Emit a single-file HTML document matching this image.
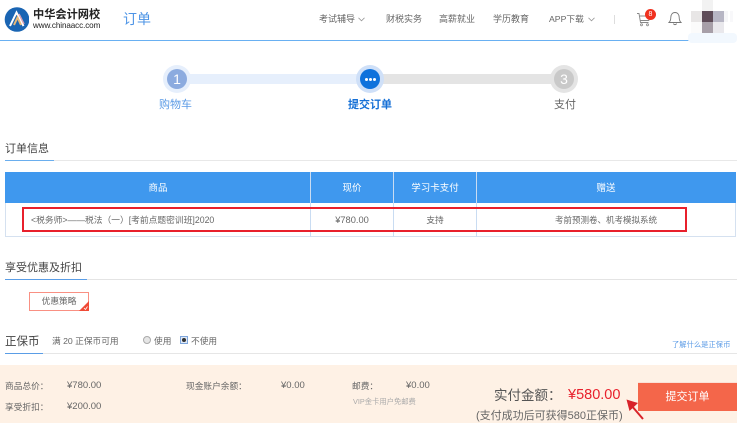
<!DOCTYPE html>
<html lang="zh"><head><meta charset="utf-8"><title>订单</title>
<style>
html,body{margin:0;padding:0;background:#fff}
#p{position:relative;width:737px;height:423px;overflow:hidden;background:#fff;font-family:"Liberation Sans","Noto Sans CJK SC",sans-serif;color:#555;filter:blur(.25px)}
#p div,#p span.a{position:absolute;white-space:nowrap}
.t{line-height:14px;height:14px}
.n{font-size:9px;color:#666;top:12px}
.c{text-align:center}
.h{font-size:9.5px;color:#fff;top:182px;text-align:center}
.s{font-size:11px;color:#444}
.f{font-size:8.700px;color:#666}
</style></head><body><div id="p">

<svg style="position:absolute;left:4px;top:6px" width="25" height="27" viewBox="0 0 25 27">
<circle cx="13" cy="13.500" r="12.300" fill="#1a65b3"/>
<path d="M6 20L12.500 6.500L19.500 20" fill="none" stroke="#fff" stroke-width="2"/>
<path d="M10 19L13.500 11.500L17 19" fill="none" stroke="#e8b979" stroke-width="2"/>
<path d="M15 8L20 18" stroke="#d9a3b5" stroke-width="1.500"/>
</svg>
<div class="t" style="left:33px;top:8px;font-size:11.200px;font-weight:700;color:#222">中华会计网校</div>
<div class="t" style="left:33px;top:18.500px;font-size:8.100px;color:#222;letter-spacing:-.1px">www.chinaacc.com</div>
<div class="t" style="left:123px;top:11px;font-size:14px;line-height:16px;height:16px;color:#4d94e6">订单</div>

<div class="t n" style="left:319px">考试辅导</div>
<svg style="position:absolute;left:358px;top:17px" width="7" height="5"><path d="M.5 .8L3.500 3.800L6.500 .8" fill="none" stroke="#999" stroke-width=".8"/></svg>
<div class="t n" style="left:386px">财税实务</div>
<div class="t n" style="left:439px">高薪就业</div>
<div class="t n" style="left:493px">学历教育</div>
<div class="t n" style="left:549px;font-size:8.700px">APP下载</div>
<svg style="position:absolute;left:588px;top:17px" width="7" height="5"><path d="M.5 .8L3.500 3.800L6.500 .8" fill="none" stroke="#999" stroke-width=".8"/></svg>
<div style="left:614px;top:15px;width:1px;height:9px;background:#ddd"></div>

<svg style="position:absolute;left:636px;top:11px" width="15" height="16" viewBox="0 0 15 16">
<path d="M1 2.500H3L4.500 11.500H12.500M3.500 5H14L12.800 9.500H4.300" fill="none" stroke="#888" stroke-width=".9"/>
<circle cx="5.500" cy="13.800" r="1" fill="none" stroke="#888" stroke-width=".8"/><circle cx="11.500" cy="13.800" r="1" fill="none" stroke="#888" stroke-width=".8"/></svg>
<div class="c" style="left:645px;top:9px;width:11px;height:11px;border-radius:50%;background:#f0311f;color:#fff;font-size:7px;line-height:11px">8</div>
<svg style="position:absolute;left:668px;top:11px" width="14" height="15" viewBox="0 0 14 15">
<path d="M1 11.500C2.500 10 2.800 8.500 2.800 6.500C2.800 3.500 4.500 1.500 7 1.500C9.500 1.500 11.200 3.500 11.200 6.500C11.200 8.500 11.500 10 13 11.500ZM5.500 12.500C5.800 14 8.200 14 8.500 12.500" fill="none" stroke="#777" stroke-width=".9"/></svg>

<div style="left:702px;top:0;width:11px;height:11px;background:#f2f2f2"></div>
<div style="left:691px;top:11px;width:11px;height:11px;background:#e8e6e6"></div>
<div style="left:702px;top:11px;width:11px;height:11px;background:#5e4c58"></div>
<div style="left:713px;top:11px;width:11px;height:11px;background:#b7b6c4"></div>
<div style="left:724px;top:11px;width:4px;height:11px;background:#f6f6f8"></div>
<div style="left:730px;top:11px;width:3px;height:11px;background:#f8f8fa"></div>
<div style="left:691px;top:22px;width:11px;height:11px;background:#fbfbfb"></div>
<div style="left:702px;top:22px;width:11px;height:11px;background:#a79fa8"></div>
<div style="left:713px;top:22px;width:11px;height:11px;background:#e9e8ec"></div>

<div style="left:0;top:40px;width:689px;height:1px;background:#69b0f2"></div>
<div style="left:688px;top:33px;width:49px;height:10px;background:#f2f8fe;border-radius:4px"></div>

<div style="left:177px;top:74px;width:193px;height:10px;background:#e6effc"></div>
<div style="left:370px;top:74px;width:194px;height:10px;background:#e4e4e4"></div>
<div style="left:163px;top:65px;width:28px;height:28px;border-radius:50%;background:#e6effc"></div>
<div class="c" style="left:167px;top:69px;width:20px;height:20px;border-radius:50%;background:#8cabdf;color:#fff;font-size:14px;line-height:20px">1</div>
<div style="left:356px;top:65px;width:28px;height:28px;border-radius:50%;background:#cfe0f8"></div>
<div style="left:360px;top:69px;width:20px;height:20px;border-radius:50%;background:#0f72dc"></div>
<div style="left:364.500px;top:77.500px;width:3px;height:3px;border-radius:50%;background:#fff"></div>
<div style="left:368.500px;top:77.500px;width:3px;height:3px;border-radius:50%;background:#fff"></div>
<div style="left:372.500px;top:77.500px;width:3px;height:3px;border-radius:50%;background:#fff"></div>
<div style="left:550px;top:65px;width:28px;height:28px;border-radius:50%;background:#e4e4e4"></div>
<div class="c" style="left:554px;top:69px;width:20px;height:20px;border-radius:50%;background:#c9c9c9;color:#fff;font-size:14px;line-height:20px">3</div>
<div class="t" style="left:159px;top:98px;font-size:11px;color:#5b9be6">购物车</div>
<div class="t" style="left:348px;top:98px;font-size:11px;font-weight:700;color:#1670d6">提交订单</div>
<div class="t" style="left:554px;top:98px;font-size:11px;color:#666">支付</div>

<div class="t s" style="left:5px;top:142px">订单信息</div>
<div style="left:5px;top:160px;width:732px;height:1px;background:#e8e8e8"></div>
<div style="left:5px;top:159.500px;width:49px;height:1.500px;background:#6aaeee"></div>

<div style="left:5px;top:172px;width:731px;height:31px;background:#3f98ee"></div>
<div style="left:5px;top:203px;width:1px;height:34px;background:#d5e1f0"></div>
<div style="left:735px;top:203px;width:1px;height:34px;background:#d5e1f0"></div>
<div style="left:5px;top:236px;width:731px;height:1px;background:#d5e1f0"></div>
<div style="left:310px;top:172px;width:1px;height:65px;background:#c9dcf2"></div>
<div style="left:393px;top:172px;width:1px;height:65px;background:#c9dcf2"></div>
<div style="left:476px;top:172px;width:1px;height:65px;background:#c9dcf2"></div>
<div class="t h" style="left:6px;width:304px">商品</div>
<div class="t h" style="left:311px;width:82px">现价</div>
<div class="t h" style="left:394px;width:82px">学习卡支付</div>
<div class="t h" style="left:477px;width:258px">赠送</div>

<div class="t f" style="left:31px;top:212.500px;font-size:8.750px">&lt;税务师&gt;——税法（一）[考前点题密训班]2020</div>
<div class="t f c" style="left:311px;top:212.500px;width:82px;font-size:9.300px">¥780.00</div>
<div class="t f c" style="left:394px;top:212.500px;width:82px">支持</div>
<div class="t f" style="left:555px;top:212.500px;font-size:8.500px">考前预测卷、机考模拟系统</div>
<div style="left:22px;top:207px;width:661px;height:21px;border:2px solid #e8202c"></div>

<div class="t s" style="left:5px;top:261px">享受优惠及折扣</div>
<div style="left:5px;top:279px;width:732px;height:1px;background:#e4e4e4"></div>
<div style="left:5px;top:278.500px;width:82px;height:1.500px;background:#5a9de6"></div>

<div style="left:29px;top:292px;width:58px;height:17px;border:1px solid #f99083"></div>
<div class="t f c" style="left:29px;top:294px;width:60px">优惠策略</div>
<svg style="position:absolute;left:79px;top:301px" width="10" height="10"><path d="M10 0V10H0Z" fill="#f04a36"/><path d="M5 7L6.500 8.500L8.500 5.500" fill="none" stroke="#fff" stroke-width=".8"/></svg>

<div class="t s" style="left:5px;top:335px;font-size:11.500px">正保币</div>
<div class="t f" style="left:52px;top:334px">满 20 正保币可用</div>
<div style="left:143px;top:336px;width:6px;height:6px;border:1px solid #aaa;border-radius:50%;background:#e6e6e6"></div>
<div class="t f" style="left:154px;top:334px">使用</div>
<div style="left:180px;top:336px;width:6px;height:6px;border:1px solid #7ea6dc;background:#dfe9f7"></div>
<div style="left:182px;top:338px;width:4px;height:4px;background:#333;border-radius:50%"></div>
<div class="t f" style="left:191px;top:334px">不使用</div>
<div class="t" style="left:672px;top:337.500px;font-size:7.300px;color:#5b9be6">了解什么是正保币</div>
<div style="left:5px;top:353px;width:732px;height:1px;background:#e6e6e6"></div>
<div style="left:5px;top:352.500px;width:38px;height:1.500px;background:#5a9de6"></div>

<div style="left:0;top:365px;width:737px;height:58px;background:#fef1e5"></div>
<div class="t f" style="left:5px;top:378.500px">商品总价：</div>
<div class="t f" style="left:67px;top:378.500px;font-size:9.500px">¥780.00</div>
<div class="t f" style="left:5px;top:399.500px">享受折扣：</div>
<div class="t f" style="left:67px;top:399.500px;font-size:9.500px">¥200.00</div>
<div class="t f" style="left:186px;top:378.500px">现金账户余额：</div>
<div class="t f" style="left:281px;top:378.500px;font-size:9.500px">¥0.00</div>
<div class="t f" style="left:352px;top:378.500px">邮费：</div>
<div class="t f" style="left:406px;top:378.500px;font-size:9.500px">¥0.00</div>
<div class="t" style="left:353px;top:394.500px;font-size:7.300px;color:#aaa">VIP金卡用户免邮费</div>

<div class="t" style="left:494px;top:388px;font-size:13.500px;line-height:16px;height:16px;color:#555">实付金额：</div>
<div class="t" style="left:568px;top:387px;font-size:14.500px;line-height:16px;height:16px;color:#e8202c">¥580.00</div>
<div class="t" style="left:476px;top:407.500px;font-size:11px;line-height:16px;height:16px;color:#666">(支付成功后可获得580正保币)</div>
<div class="c" style="left:638px;top:382px;width:99px;height:28px;background:#f4664a;border-top:1px solid #fbe0d6;color:#fff;font-size:11px;line-height:28px">提交订单</div>
<svg style="position:absolute;left:622px;top:396px" width="24" height="27"><path d="M21 23L9 9" stroke="#d8232a" stroke-width="2"/><path d="M4.500 3.500L16 7L7.500 15Z" fill="#d8232a"/></svg>
</div></body></html>
